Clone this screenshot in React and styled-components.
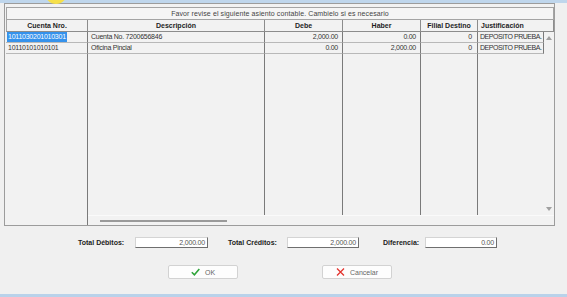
import React from "react";
import styled, { createGlobalStyle } from "styled-components";

const GlobalStyle = createGlobalStyle`
  html, body {
    margin: 0;
    padding: 0;
    background: #f0f0f0;
  }
  body {
    font-family: "Liberation Sans", Arial, sans-serif;
  }
`;

const COLS = "82px 177px 78px 78px 57px 76px";
const BODY_COLS = "82px 177px 78px 78px 57px 66px 10px";

const Window = styled.div`
  position: relative;
  width: 567px;
  height: 297px;
  background: #f0f0f0;
  display: flex;
  flex-direction: column;
  overflow: hidden;
  font-size: 7px;
  color: #2a2a2a;
`;

const Strip = styled.div`
  height: ${(p) => p.$h}px;
  background: ${(p) => p.$color};
  flex-shrink: 0;
`;

const CursorDot = styled.div`
  position: absolute;
  left: 45px;
  top: -18px;
  width: 22px;
  height: 22px;
  border-radius: 50%;
  background: #f6e04a;
`;

const Frame = styled.div`
  box-sizing: border-box;
  width: 551px;
  height: 223px;
  margin-left: 4px;
  border: 1px solid #9c9c9c;
  padding: 3px 0 0 1px;
  display: flex;
  flex-direction: column;
  background: #f2f2f2;
`;

const Title = styled.div`
  box-sizing: border-box;
  width: 548px;
  height: 13px;
  border: 1px solid #a4a4a4;
  background: #f5f5f5;
  text-align: center;
  line-height: 11px;
  letter-spacing: 0.1px;
  color: #444;
`;

const HeaderRow = styled.div`
  display: grid;
  grid-template-columns: ${COLS};
  height: 12px;
`;

const HeadCell = styled.div`
  box-sizing: border-box;
  border-right: 1px solid #8c8c8c;
  border-bottom: 1px solid #8c8c8c;
  border-left: ${(p) => (p.$first ? "1px solid #a4a4a4" : "none")};
  font-weight: bold;
  line-height: 11px;
  text-align: ${(p) => p.$align || "center"};
  padding: ${(p) => p.$pad || "0"};
  white-space: nowrap;
  overflow: hidden;
  color: #1e1e1e;
`;

const Body = styled.div`
  display: grid;
  grid-template-columns: ${BODY_COLS};
  grid-template-rows: 11px 11px 1fr;
  height: 183px;
`;

const Cell = styled.div`
  box-sizing: border-box;
  border-right: ${(p) => (p.$last ? "none" : "1px solid #7a7a7a")};
  border-bottom: ${(p) => (p.$filler ? "none" : "1px solid #b8b8b8")};
  line-height: 10px;
  letter-spacing: ${(p) => p.$ls ?? -0.25}px;
  text-align: ${(p) => p.$align || "left"};
  padding: 0 ${(p) => p.$pr ?? 3}px 0 ${(p) => p.$pl ?? 3}px;
  white-space: nowrap;
  overflow: hidden;
  color: #333;
`;

const CellText = styled.span`
  display: inline-block;
  line-height: 10px;
  padding: 0 1px;
  background: ${(p) => (p.$selected ? "#3592ec" : "transparent")};
  color: ${(p) => (p.$selected ? "#fff" : "inherit")};
`;

const VScroll = styled.div`
  grid-column: 7;
  grid-row: 1 / 4;
  display: flex;
  flex-direction: column;
  justify-content: space-between;
  align-items: center;
  padding: 4px 0 4px 0;
`;

const Arrow = styled.svg`
  width: 6px;
  height: 4px;
  display: block;
`;

const HScroll = styled.div`
  display: flex;
  height: 10px;
`;

const FrozenFoot = styled.div`
  box-sizing: border-box;
  width: 82px;
  border-right: 1px solid #7a7a7a;
`;

const Track = styled.div`
  flex: 1;
  padding: 4px 0 0 12px;
  border-top: 1px solid #fafafa;
`;

const Thumb = styled.div`
  width: 127px;
  height: 2px;
  background: #9a9a9a;
`;

const TotalsRow = styled.div`
  display: flex;
  align-items: center;
  height: 11px;
  margin-top: 11px;
  padding-left: 78px;
`;

const Field = styled.div`
  display: flex;
  align-items: center;
  margin-right: ${(p) => p.$mr || 0}px;
`;

const Label = styled.span`
  width: ${(p) => p.$w}px;
  margin-right: ${(p) => p.$gap}px;
  font-weight: bold;
  color: #222;
  white-space: nowrap;
`;

const Input = styled.div`
  box-sizing: border-box;
  width: ${(p) => p.$w}px;
  height: 11px;
  background: #fff;
  border-top: 1px solid #d4d4d4;
  border-left: 1px solid #d4d4d4;
  border-bottom: 1px solid #6e6e6e;
  border-right: 1px solid #6e6e6e;
  text-align: right;
  line-height: 9px;
  padding-right: 2px;
  letter-spacing: -0.2px;
  color: #555;
`;

const ButtonRow = styled.div`
  display: flex;
  gap: 84px;
  margin-top: 17px;
  padding-left: 168px;
`;

const Button = styled.div`
  box-sizing: border-box;
  width: 70px;
  height: 14px;
  background: #fdfdfd;
  border: 1px solid #d2d2d2;
  border-radius: 2px;
  display: flex;
  align-items: center;
  justify-content: center;
  gap: 5px;
  color: #666;
  font-size: 7px;
`;

const Icon = styled.svg`
  width: 9px;
  height: 8px;
  display: block;
`;

const Spacer = styled.div`
  flex: 1;
`;

const rows = [
  {
    cuenta: "1011030201010301",
    desc: "Cuenta No. 7200656846",
    debe: "2,000.00",
    haber: "0.00",
    filial: "0",
    just: "DEPOSITO PRUEBA.",
    selected: true,
  },
  {
    cuenta: "10110101010101",
    desc: "Oficina Pincial",
    debe: "0.00",
    haber: "2,000.00",
    filial: "0",
    just: "DEPOSITO PRUEBA.",
  },
];

export default function App() {
  return (
    <>
      <GlobalStyle />
      <Window>
        <CursorDot />
        <Strip $h={3} $color="#bfd6ec" />
        <Frame>
          <Title>Favor revise el siguiente asiento contable. Cambielo si es necesario</Title>
          <HeaderRow>
            <HeadCell $first>Cuenta Nro.</HeadCell>
            <HeadCell>Descripción</HeadCell>
            <HeadCell>Debe</HeadCell>
            <HeadCell>Haber</HeadCell>
            <HeadCell>Filial Destino</HeadCell>
            <HeadCell $align="left" $pad="0 0 0 3px">Justificación</HeadCell>
          </HeaderRow>
          <Body>
            {rows.map((r, i) => (
              <React.Fragment key={i}>
                <Cell $pl={1}>
                  <CellText $selected={r.selected}>{r.cuenta}</CellText>
                </Cell>
                <Cell>{r.desc}</Cell>
                <Cell $align="right" $pr={4}>{r.debe}</Cell>
                <Cell $align="right" $pr={4}>{r.haber}</Cell>
                <Cell $align="right" $pr={5}>{r.filial}</Cell>
                <Cell $pl={2} $pr={0} $ls={-0.45}>{r.just}</Cell>
              </React.Fragment>
            ))}
            <Cell $filler />
            <Cell $filler />
            <Cell $filler />
            <Cell $filler />
            <Cell $filler />
            <Cell $filler $last />
            <VScroll>
              <Arrow viewBox="0 0 6 4">
                <path d="M0 4 L3 0 L6 4 Z" fill="#a0a0a0" />
              </Arrow>
              <Arrow viewBox="0 0 6 4">
                <path d="M0 0 L6 0 L3 4 Z" fill="#a0a0a0" />
              </Arrow>
            </VScroll>
          </Body>
          <HScroll>
            <FrozenFoot />
            <Track>
              <Thumb />
            </Track>
          </HScroll>
        </Frame>

        <TotalsRow>
          <Field $mr={20}>
            <Label $w={49} $gap={8}>Total Débitos:</Label>
            <Input $w={73}>2,000.00</Input>
          </Field>
          <Field $mr={24}>
            <Label $w={50} $gap={9}>Total Créditos:</Label>
            <Input $w={72}>2,000.00</Input>
          </Field>
          <Field>
            <Label $w={38} $gap={4}>Diferencia:</Label>
            <Input $w={72}>0.00</Input>
          </Field>
        </TotalsRow>

        <ButtonRow>
          <Button>
            <Icon viewBox="0 0 9 8">
              <path d="M0.8 4.2 L3.4 6.8 L8.3 1" fill="none" stroke="#2fa43a" strokeWidth="1.6" />
            </Icon>
            OK
          </Button>
          <Button>
            <Icon viewBox="0 0 9 8">
              <path d="M1 0.5 L8 7.5 M8 0.5 L1 7.5" fill="none" stroke="#e3342f" strokeWidth="1.3" />
            </Icon>
            Cancelar
          </Button>
        </ButtonRow>

        <Spacer />
        <Strip $h={3} $color="#b9d2ea" />
      </Window>
    </>
  );
}
